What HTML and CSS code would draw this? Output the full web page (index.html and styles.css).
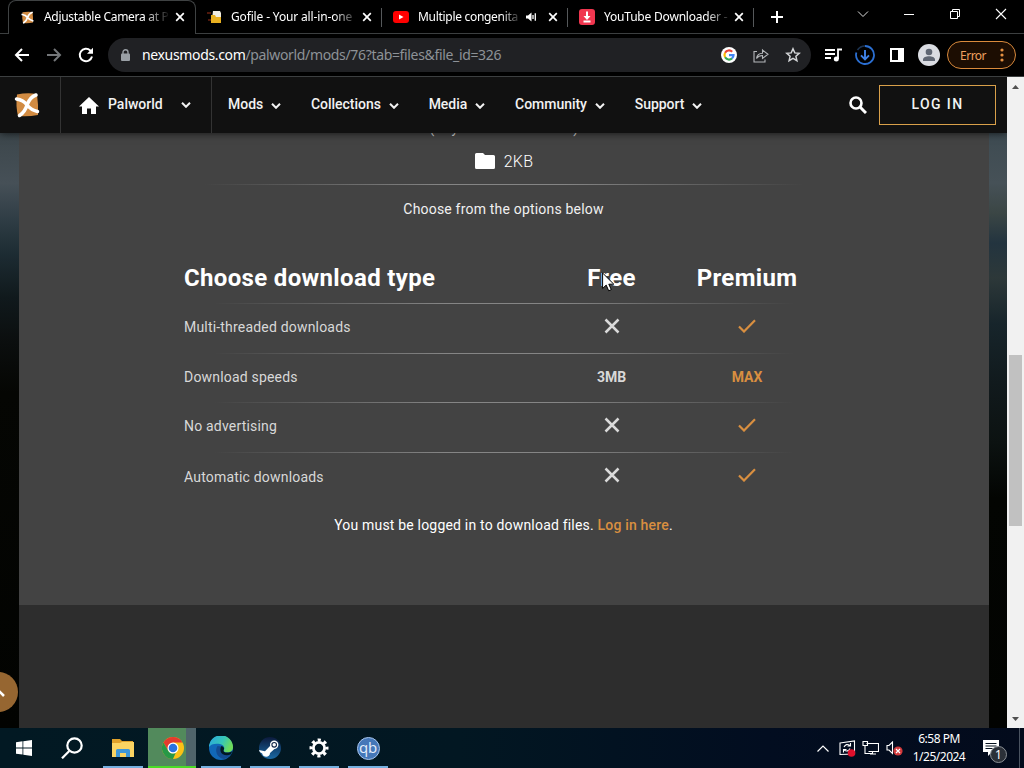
FILE: index.html
```html
<!DOCTYPE html>
<html lang="en">
<head>
<meta charset="utf-8">
<title>Adjustable Camera at Palworld Nexus</title>
<link rel="stylesheet" href="styles.css">
</head>
<body>

<!-- shared icons -->
<svg class="defs" width="0" height="0">
<symbol id="nexus" viewBox="0 0 26 26">
<path fill="#d18b42" d="M3 2.500q10-2 20-.5 1.500 11 1 21-10 2-20 1-2.500-10-1-21.500z"/>
<path d="M13 13Q9.500 8 2.500 7M13 13Q16 5 22 3M13 13Q17 18 23.500 19.500M13 13Q11 20 5.500 23.500" fill="none" stroke="#fff" stroke-width="3.500" stroke-linecap="round"/>
</symbol>
<symbol id="close" viewBox="0 0 10 10"><path d="M1.2 1.2l7.6 7.6M8.8 1.2L1.2 8.8" fill="none" stroke="currentColor" stroke-width="1.7"/></symbol>
<symbol id="chev" viewBox="0 0 10 6"><path d="M1 .8l4 4 4-4" fill="none" stroke="currentColor" stroke-width="2"/></symbol>
<symbol id="cross" viewBox="0 0 16 16"><path d="M1.500 1.500l13 13M14.500 1.500l-13 13" fill="none" stroke="#dadada" stroke-width="2.500"/></symbol>
<symbol id="tick" viewBox="0 0 18 14"><path d="M1 7.500l5 5L17 1.300" fill="none" stroke="#d98f40" stroke-width="2.200"/></symbol>
</svg>

<!-- tabs -->
<div class="tabs">
<div class="tab active">
<svg class="fav" width="13" height="13"><use href="#nexus"/></svg>
<span class="name name1">Adjustable Camera at P</span>
<svg class="x" width="10" height="10"><use href="#close"/></svg>
</div>
<div class="tab">
<svg class="fav" width="16" height="14" viewBox="0 0 16 14"><path d="M0 3h4M1 10h3" stroke="#6a2010" stroke-width="1.500"/><path fill="#f0ece0" d="M6 1h7l1 2v6H5z"/><path fill="#e9b020" d="M4 5h4l1 2h5v6H4z"/></svg>
<span class="name name2">Gofile - Your all-in-one</span>
<svg class="x" width="10" height="10"><use href="#close"/></svg>
</div>
<div class="tab">
<svg class="fav" width="16" height="12" viewBox="0 0 16 12"><rect width="16" height="12" rx="3" fill="#f00"/><path fill="#fff" d="M6 3.500v5L10.500 6z"/></svg>
<span class="name name3">Multiple congenita</span>
<svg class="snd" width="11" height="10" viewBox="0 0 11 10"><path fill="#fff" d="M0 3.500h2L5.500.5v9L2 6.500H0z"/><path d="M7 3v4M9.300 1.200v7.600" stroke="#fff" stroke-width="1.300"/></svg>
<svg class="x" width="10" height="10"><use href="#close"/></svg>
</div>
<div class="tab">
<svg class="fav" width="16" height="16" viewBox="0 0 16 16"><rect width="16" height="16" rx="3" fill="#f0364f"/><path d="M8 2.500v6M4.500 12.500h7" stroke="#fff" stroke-width="2"/><path fill="#fff" d="M4.500 7h7L8 11z"/></svg>
<span class="name name4">YouTube Downloader -</span>
<svg class="x" width="10" height="10"><use href="#close"/></svg>
</div>
<div class="newtab"><svg width="12" height="12" viewBox="0 0 12 12"><path d="M6 0v12M0 6h12" stroke="#fff" stroke-width="2"/></svg></div>
<div class="winbtns">
<svg width="12" height="12" viewBox="0 0 12 12"><path d="M1 3.500l5 5 5-5" fill="none" stroke="#ddd"/></svg>
<svg width="12" height="12" viewBox="0 0 12 12"><path d="M1 6.500h10" stroke="#fff"/></svg>
<svg width="12" height="12" viewBox="0 0 12 12"><path d="M1.500 3.500h7v7h-7zM3.500 3.500v-2h7v7h-2" fill="none" stroke="#fff"/></svg>
<svg width="12" height="12" viewBox="0 0 12 12"><path d="M1 1l10 10M11 1L1 11" stroke="#fff" stroke-width="1.100"/></svg>
</div>
</div>

<!-- toolbar -->
<div class="toolbar">
<svg class="nav" width="16" height="14" viewBox="0 0 16 14"><path d="M15 7H2M8 1L2 7l6 6" fill="none" stroke="#fff" stroke-width="2"/></svg>
<svg class="nav" width="16" height="14" viewBox="0 0 16 14"><path d="M1 7h13M8 1l6 6-6 6" fill="none" stroke="#74777a" stroke-width="2"/></svg>
<svg class="nav" width="16" height="16" viewBox="0 0 16 16"><path d="M14 9.500A6.200 6.200 0 1 1 12.300 3.500L14 5.200" fill="none" stroke="#fff" stroke-width="2"/><path fill="#fff" d="M15 .8v6H9z"/></svg>
<div class="omnibox">
<svg class="lock" width="9" height="12" viewBox="0 0 9 12"><rect y="4.500" width="9" height="7.500" rx="1" fill="#9aa0a6"/><path d="M2 5V3.200a2.500 2.500 0 0 1 5 0V5" fill="none" stroke="#9aa0a6" stroke-width="1.400"/></svg>
<span class="host">nexusmods.com</span><span class="path">/palworld/mods/76?tab=files&amp;file_id=326</span>
<div class="omniicons">
<svg width="16" height="16" viewBox="0 0 16 16"><circle cx="8" cy="8" r="8" fill="#fff"/><g fill="none" stroke-width="2.200"><path stroke="#ea4335" d="M4.100 5.700A4.500 4.500 0 0 1 11.200 4.800"/><path stroke="#fbbc05" d="M4.100 10.300a4.500 4.500 0 0 1 0-4.600"/><path stroke="#34a853" d="M11 11.400a4.500 4.500 0 0 1-6.900-1.100"/><path stroke="#4285f4" d="M8 8.200h4.500a4.500 4.500 0 0 1-1.500 3.200"/></g></svg>
<svg width="16" height="15" viewBox="0 0 16 15"><path d="M4 3.500H1v10.500h11V11.500M3.500 10.500C4 7 6 5.300 9.500 5.200V2L15 6.300 9.500 10.500V7.500C7 7.500 5 8.300 3.500 10.500z" fill="none" stroke="#b4b7ba" stroke-width="1.100"/></svg>
<svg width="16" height="16" viewBox="0 0 16 16"><path d="M8 1.800l1.800 4.100 4.400.4-3.300 3 1 4.400L8 11.400l-3.900 2.300 1-4.400-3.300-3 4.400-.4z" fill="none" stroke="#d4d6d8" stroke-width="1.500"/></svg>
</div>
</div>
<div class="exts">
<svg width="17" height="14" viewBox="0 0 17 14"><path d="M0 2h10M0 6h10M0 10h6M13 11V1.500h4" fill="none" stroke="#fff" stroke-width="1.800"/><circle cx="11.300" cy="11" r="2.500" fill="#fff"/></svg>
<svg width="20" height="20" viewBox="0 0 20 20"><path d="M10 1a9 9 0 1 1-8.600 6.400" fill="none" stroke="#2b6fd2" stroke-width="1.800"/><path d="M2.500 5A9 9 0 0 1 10 1" fill="none" stroke="#1d3350" stroke-width="1.600"/><path d="M10 5v9M6 10.300l4 4 4-4" fill="none" stroke="#3f82e6" stroke-width="1.900"/></svg>
<svg width="14" height="14" viewBox="0 0 14 14"><path fill="#fff" fill-rule="evenodd" d="M0 0h14v14H0zM2 2v10h6V2z"/></svg>
<svg width="22" height="22" viewBox="0 0 22 22"><circle cx="11" cy="11" r="11" fill="#dadce2"/><circle cx="11" cy="8" r="3.300" fill="#5f6673"/><path fill="#5f6673" d="M5 17v-1.500c0-4.500 12-4.500 12 0V17z"/></svg>
<div class="error">Error<svg width="4" height="14" viewBox="0 0 4 14"><g fill="#e59142"><circle cx="2" cy="2" r="1.600"/><circle cx="2" cy="7" r="1.600"/><circle cx="2" cy="12" r="1.600"/></g></svg></div>
</div>
</div>

<!-- page -->
<div class="view">
<div class="site">
<div class="header">
<div class="logo"><svg width="26" height="26"><use href="#nexus"/></svg></div>
<div class="game">
<svg width="20" height="17" viewBox="0 0 20 17"><path fill="#fff" d="M10 0l10 9.500h-3V17h-5v-5.500H8V17H3V9.500H0z"/></svg>
<span>Palworld</span>
<svg class="chev" width="10" height="6"><use href="#chev"/></svg>
</div>
<div class="menu">
<div class="item">Mods<svg width="10" height="6"><use href="#chev"/></svg></div>
<div class="item">Collections<svg width="10" height="6"><use href="#chev"/></svg></div>
<div class="item">Media<svg width="10" height="6"><use href="#chev"/></svg></div>
<div class="item">Community<svg width="10" height="6"><use href="#chev"/></svg></div>
<div class="item">Support<svg width="10" height="6"><use href="#chev"/></svg></div>
</div>
<svg class="search" width="18" height="18" viewBox="0 0 18 18"><circle cx="7" cy="7" r="5.500" fill="none" stroke="#fff" stroke-width="2.600"/><path d="M11 11l6 6" stroke="#fff" stroke-width="3"/></svg>
<div class="login">LOG IN</div>
</div>

<div class="body">
<div class="side left"></div>
<div class="main">
<div class="panel">
<div class="filename">(Keyboard and Mouse)</div>
<div class="size"><svg width="20" height="16" viewBox="0 0 20 16"><path fill="#fff" d="M1.500 0H8l2 2h8.500q1.500 0 1.500 1.500v11q0 1.500-1.500 1.500h-17Q0 16 0 14.500v-13Q0 0 1.500 0z"/></svg><span>2KB</span></div>
<div class="line top"></div>
<p class="choose">Choose from the options below</p>

<div class="types">
<div class="row head"><h2>Choose download type</h2><h2>Free</h2><h2>Premium</h2></div>
<div class="line"></div>
<div class="row"><span>Multi-threaded downloads</span><svg width="16" height="16"><use href="#cross"/></svg><svg width="18" height="14"><use href="#tick"/></svg></div>
<div class="line"></div>
<div class="row speeds"><span>Download speeds</span><b>3MB</b><b class="max">MAX</b></div>
<div class="line"></div>
<div class="row"><span>No advertising</span><svg width="16" height="16"><use href="#cross"/></svg><svg width="18" height="14"><use href="#tick"/></svg></div>
<div class="line"></div>
<div class="row last"><span>Automatic downloads</span><svg width="16" height="16"><use href="#cross"/></svg><svg width="18" height="14"><use href="#tick"/></svg></div>
</div>
<p class="must">You must be logged in to download files. <a href="#">Log in here</a>.</p>
</div>
</div>
<div class="side right"></div>
</div>
<div class="totop"><svg width="14" height="9" viewBox="0 0 14 9"><path d="M1 8l6-6 6 6" fill="none" stroke="#fff" stroke-width="2.600"/></svg></div>
</div>

<div class="scroll">
<svg width="7" height="4" viewBox="0 0 7 4"><path fill="#505050" d="M0 4l3.500-4L7 4z"/></svg>
<div class="thumb"></div>
<svg width="7" height="4" viewBox="0 0 7 4"><path fill="#505050" d="M0 0l3.500 4L7 0z"/></svg>
</div>
</div>

<!-- taskbar -->
<div class="taskbar">
<div class="task start"><svg width="16" height="16" viewBox="0 0 16 16"><path fill="#fff" d="M0 2.200l6.500-.9v6.200H0zM7.300 1.200L16 0v7.500H7.300zM0 8.400h6.500v6.200L0 13.700zM7.300 8.400H16V16l-8.700-1.200z"/></svg></div>
<div class="task find"><svg width="22" height="22" viewBox="0 0 22 22"><circle cx="13.500" cy="8.500" r="7.200" fill="none" stroke="#fff" stroke-width="2.200"/><path d="M8.300 14L1 21.300" stroke="#fff" stroke-width="2.200"/></svg></div>
<div class="task open"><svg width="22" height="18" viewBox="0 0 22 18"><path fill="#e0a12a" d="M0 0h8l2 2h11v4H0z"/><path fill="#fbd462" d="M0 4h8l2-1h12v15H0z"/><path fill="#3f97d8" d="M4 18v-6.500q0-1.500 1.500-1.500h11q1.500 0 1.500 1.500V18h-4v-4H8v4z"/></svg></div>
<div class="task chrome"><svg width="22" height="24" viewBox="0 0 24 24"><circle cx="12" cy="12" r="12" fill="#fbc116"/><path fill="#e33b2e" d="M1.600 6A12 12 0 0 1 22.400 6H12L6.800 15z"/><path fill="#279847" d="M1.600 6L6.800 15Q9 18 12 18l3-.8L12 24A12 12 0 0 1 1.600 6z"/><circle cx="12" cy="12" r="6" fill="#fff"/><circle cx="12" cy="12" r="4.700" fill="#2a73e0"/></svg></div>
<div class="task open"><svg width="24" height="24" viewBox="0 0 24 24"><defs><linearGradient id="e1" x1="0" y1="0" x2="1" y2=".4"><stop offset="0" stop-color="#2aa5e0"/><stop offset=".6" stop-color="#36c6b8"/><stop offset="1" stop-color="#6edb5a"/></linearGradient></defs><circle cx="12" cy="12" r="12" fill="#1168b8"/><path fill="url(#e1)" d="M0 11A12 12 0 0 1 24 11.500c0 3.500-3 5-6 5-3 0-4-1.500-3-3 .8-1.500 0-4.500-4-5.500C6.500 7 1.500 8 0 11z"/><path fill="#134b91" d="M8.500 10c-3 4-1 12 6.500 13 3-.7 5.500-2.500 7-5-4 2-9.500 1-10.500-3-.6-2 .2-4 1-4.500z"/><path fill="#021823" d="M12.500 10c2.500.5 3.200 2.500 2.200 4-.8 1.400.5 2.600 3.300 2.600 2 0 4-.6 5.400-1.600L22 18.200c-4 2-9.500 1-10.500-3-.4-2 0-4 1-5.200z"/></svg></div>
<div class="task open"><svg width="22" height="22" viewBox="0 0 22 22"><defs><linearGradient id="s1" x1="0" y1="0" x2="0" y2="1"><stop offset="0" stop-color="#0c1a3c"/><stop offset="1" stop-color="#1a6aa5"/></linearGradient></defs><circle cx="11" cy="11" r="11" fill="url(#s1)"/><path fill="#fff" d="M0 13l6 1.300 6-6.300 4 3.500-5 4.500c0 5-7 5-7.800.5L.8 15z"/><circle cx="15.200" cy="7.800" r="4.200" fill="#fff"/><circle cx="15.200" cy="7.800" r="2.300" fill="none" stroke="#15284a" stroke-width="1.100"/></svg></div>
<div class="task open"><svg width="20" height="20" viewBox="0 0 20 20"><circle cx="10" cy="10" r="5.600" fill="none" stroke="#fff" stroke-width="2.800"/><circle cx="10" cy="10" r="8" fill="none" stroke="#fff" stroke-width="3" stroke-dasharray="3.140 3.143" stroke-dashoffset="1.570"/></svg></div>
<div class="task open"><span class="qb">qb</span></div>
<div class="tray">
<svg class="up" width="12" height="7" viewBox="0 0 12 7"><path d="M.5 6.500L6 1l5.500 5.500" fill="none" stroke="#fff" stroke-width="1.200"/></svg>
<svg class="upd" width="17" height="17" viewBox="0 0 17 17"><path d="M1 3l14.500-2v13L1 14.500zM5 7q2-4 6-1.500M11.500 3v3H8.500M11 8.500q-2 4-6 1.500M4.500 12.500v-3h3" fill="none" stroke="#fff" stroke-width="1.100"/><circle cx="12.500" cy="13" r="3.800" fill="#e0102c"/></svg>
<svg class="net" width="17" height="14" viewBox="0 0 17 14"><path d="M4.500 2.500h12v8H6.500M1 .5h4.500v4H1zM3 4.500v8h7M8 13h6M10.500 10.500V13" fill="none" stroke="#fff" stroke-width="1.100"/></svg>
<svg class="vol" width="17" height="15" viewBox="0 0 17 15"><path d="M1 4.500h2L6.500 1v11.500L3 9H1z" fill="none" stroke="#fff" stroke-width="1.100"/><circle cx="12" cy="10" r="4.600" fill="#d33a3c"/><path d="M10 8l4 4M14 8l-4 4" stroke="#fff" stroke-width="1.200"/></svg>
<div class="clock">6:58 PM<br>1/25/2024</div>
<div class="notes"><svg width="16" height="16" viewBox="0 0 16 16"><path fill="#fff" d="M0 0h16v12H9l-4 4v-4H0z"/><path d="M2.500 3.500h11M2.500 6h11M2.500 8.500h7" stroke="#06121f" stroke-width="1.100"/></svg><span class="badge">1</span></div>
<div class="desk"></div>
</div>
</div>

<svg class="cursor" width="13" height="20" viewBox="0 0 13 20"><path fill="#fff" stroke="#000" d="M.6 1v15.500l3.600-3.400 2.500 5.700 2.600-1.200-2.500-5.400h5z"/></svg>

</body>
</html>
```
FILE: styles.css
```css
body {margin:0; width:1024px; height:768px; overflow:hidden; background:#000; display:flex; flex-direction:column;
	font-family:"Roboto","Liberation Sans",sans-serif; font-size:14px; color:#fff; position:relative;}
svg {display:block; flex:none;}
.defs {position:absolute;}

/* tabs */
.tabs {height:34px; flex:none; display:flex; box-sizing:border-box; font-family:"Noto Sans","Open Sans",sans-serif; font-size:12px;
	background:linear-gradient(#3c3f40,#3c3f40) 0 33px/100% 1px no-repeat #000;}
.tab {width:186px; height:34px; box-sizing:border-box; display:flex; align-items:center; padding:0 10px 1px 11px;
	background:linear-gradient(#55585a,#55585a) 100% 8px/1px 19px no-repeat;}
.tab.active {margin-left:8px; width:188px; height:34px; padding-left:12px; border:1px solid #3f4243; border-bottom:0;
	border-radius:8px 8px 0 0; background:#000;}
.fav {margin-right:8px;}
.tab.active .fav {margin-right:10px;}
.name {height:18px; line-height:18px; white-space:nowrap;
	-webkit-mask-image:linear-gradient(90deg,#000 80%,transparent); mask-image:linear-gradient(90deg,#000 80%,transparent);}
.name1 {width:126px; letter-spacing:-.3px;}
.name2 {width:128px; letter-spacing:-.15px;}
.name3 {width:104px; letter-spacing:-.3px; padding-left:1px;}
.name4 {width:128px; letter-spacing:-.2px; padding-left:1px;}
.x {margin-left:auto;}
.snd {margin-left:4px;}
.newtab {width:46px; display:flex; align-items:center; justify-content:center;}
.winbtns {flex:1; display:flex; align-items:center; justify-content:space-between; padding:0 17px 6px 57px;}

/* toolbar */
.toolbar {height:43px; flex:none; box-sizing:border-box; border-bottom:1px solid #3c3f40; display:flex; align-items:center; padding:0 8px 0 14px;
	font-family:"Noto Sans","Open Sans",sans-serif; background:#000;}
.nav {margin-right:16px;}
.omnibox {width:703px; height:34px; box-sizing:border-box; border-radius:17px; background:#202124; display:flex; align-items:center; padding:0 10px 0 13px; margin-left:-2px;}
.lock {margin-right:12px;}
.host, .path {margin-top:-1px;}
.host {letter-spacing:-.35px;}
.path {color:#8d9297; letter-spacing:-.34px;}
.omniicons {margin-left:auto; display:flex; align-items:center; gap:16px;}
.exts {display:flex; align-items:center; margin-left:auto;}
.exts > svg {margin-right:14px;}
.exts > svg:nth-child(2) {margin:0 15px 0 -1px;}
.exts > svg:nth-child(4) {margin-right:7px;}
.error {width:69px; height:28px; box-sizing:border-box; border:1px solid #d98a3c; border-radius:14px; background:#1c0d02; color:#f0a060;
	font-size:12px; letter-spacing:-.5px; display:flex; align-items:center; justify-content:space-between; padding:0 11px 0 12px;}

/* site */
.view {height:651px; flex:none; display:flex;}
.site {width:1007px; position:relative; display:flex; flex-direction:column; overflow:hidden;}
.header {height:56px; flex:none; background:#111; display:flex; align-items:center; position:relative; box-shadow:0 0 8px rgba(0,0,0,.75);
	font-weight:500; font-size:14px; color:#f2f2f2;}
.logo {width:61px; height:56px; border-right:1px solid #333; display:flex; align-items:center; padding-left:14px; box-sizing:border-box; flex:none;}
.game {width:151px; height:56px; box-sizing:border-box; border-right:1px solid #333; display:flex; align-items:center; padding-left:18px;}
.game span {margin:-2px 0 0 9px;}
.game .chev {margin-left:18px;}
.menu {display:flex; width:636px; padding-left:16px; box-sizing:border-box; margin-top:-2px;}
.item {display:flex; align-items:center; gap:7.800px; margin-right:30px; white-space:nowrap; letter-spacing:-.03px;}
.item svg {margin-top:3px;}
.search {margin-left:1px;}
.login {width:117px; height:40px; box-sizing:border-box; border:1px solid #d9a04a; margin-left:12px; text-align:center; line-height:37px; letter-spacing:1.4px;}

.body {flex:1; display:flex; min-height:0;}
.side.left {width:19px; background:linear-gradient(#3c464b 0,#465057 50px,#2d3b43 90px,#1d2c33 120px,#10191c 165px,#0b0e0e 210px,#050603 260px,#020301);}
.side.right {width:18px; background:linear-gradient(#3e4b52 0,#465157 50px,#3b4645 80px,#23343f 110px,#2d3839 145px,#17252b 190px,#111a1d 250px,#0c1211 310px,#030502 365px,#020301);}
.main {width:970px; background:#2d2d2d;}
.panel {height:472px; background:#434343; overflow:hidden; display:flex; flex-direction:column; align-items:center; text-align:center; letter-spacing:.19px;}
.filename {height:18px; line-height:18px; margin-top:-14px; color:#ddd; flex:none; letter-spacing:.4px;}
.size {height:22px; margin-top:13px; display:flex; align-items:center; gap:9px; font-size:16px; font-weight:300; flex:none; letter-spacing:.3px;}
.size span {margin-top:1px;}
.line {height:1px; flex:none; margin:0 30px; background:linear-gradient(90deg,transparent,#858585 40%,#858585 60%,transparent);}
.line.top {width:600px; margin:12px 0 0;}
.choose {margin:15px 0 0; height:18px; line-height:18px; color:#f0f0f0; width:100%; text-indent:-1px;}
.types {width:640px; margin-top:42px; color:#d8d8d8;}
.row {height:49px; box-sizing:border-box; padding-bottom:3px; display:grid; grid-template-columns:360px 135px 136px; align-items:center; justify-items:center;}
.row > :first-child {justify-self:start;}
.row.head {height:43px; padding-bottom:0;}
.row.speeds {height:48px; padding-bottom:2px;}
.row.speeds b {letter-spacing:0;}
.row.last {height:48px; padding-bottom:1px;}
.row svg {margin-top:-2px;}
.row.last svg {margin-top:-4px;}
h2 {margin:0; font-size:24px; line-height:28px; font-weight:700; color:#fff; margin-top:-8px; letter-spacing:.34px;}
.max {color:#d98f40;}
.must {margin:15px 0 0; height:18px; line-height:18px; width:100%; text-indent:-1px;}
.must a {color:#d98f40; font-weight:500; text-decoration:none;}
.totop {position:absolute; left:-22px; top:595px; width:40px; height:40px; border-radius:50%; background:#966631; display:flex; align-items:center; justify-content:center;}

.scroll {width:17px; background:#f1f1f1; display:flex; flex-direction:column; align-items:center; padding:8px 0 7px; box-sizing:border-box;}
.thumb {width:13px; height:171px; background:#c1c1c1; margin:266px 0 auto;}

/* taskbar */
.taskbar {height:40px; flex:none; display:flex; background:linear-gradient(90deg,#021923,#021722 45%,#020d20 75%,#030b1c);}
.task {width:40px; height:40px; box-sizing:border-box; margin-right:9px; display:flex; align-items:center; justify-content:center; flex:none;}
.start {width:48px; margin:0;}
.find {width:48px; margin-right:7px;}
.open {border-bottom:2px solid #76b0e0; padding-top:2px;}
.chrome {width:48px; margin:0 5px 0 -4px; border-bottom:2px solid #4bdc26; padding-top:2px; padding-left:2px; background:linear-gradient(90deg,#528a5c 38px,#4f646b 38px);}
.qb {width:23px; height:23px; box-sizing:border-box; border:1px solid #a9c6ee; border-radius:50%; background:#4577b8; color:#e4eefc; font:15px/19px "Open Sans",sans-serif; text-align:center; letter-spacing:-.3px;}
.tray {margin-left:auto; display:flex; align-items:center; font-family:"Noto Sans",sans-serif; font-size:12px; width:207px;}
.upd {margin-left:10px;}
.net {margin-left:6px;}
.vol {margin-left:7px;}
.clock {width:62px; margin-left:5px; text-align:center; line-height:18px; letter-spacing:-.5px; white-space:nowrap;}
.notes {position:relative; margin-left:13px;}
.badge {position:absolute; left:7px; top:6px; width:17px; height:17px; box-sizing:border-box; border:1px solid #8b9096; border-radius:50%; background:#2b3038;
	font-size:12px; line-height:15px; text-align:center;}
.desk {width:1px; height:40px; background:#4a5360; margin-left:20px;}

.cursor {position:absolute; left:602px; top:272px;}
```
